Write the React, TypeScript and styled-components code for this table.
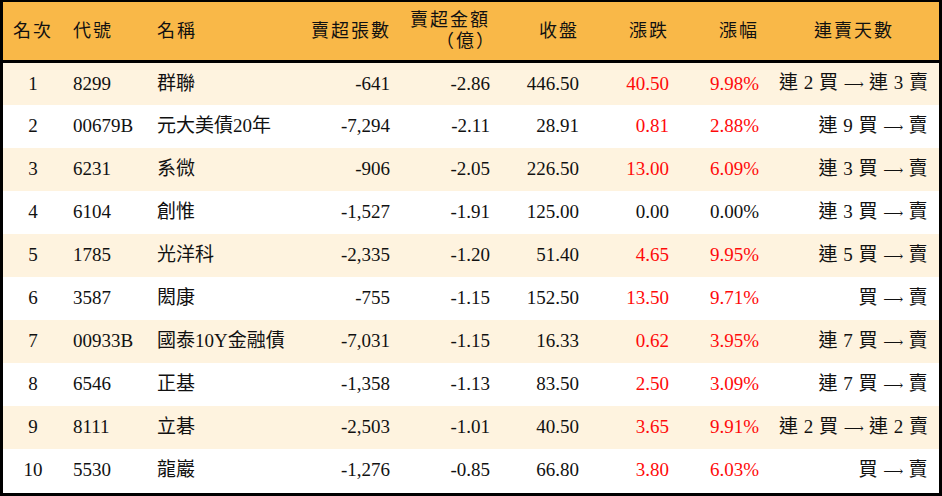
import React from 'react';
import styled, { createGlobalStyle } from 'styled-components';

const GlobalStyle = createGlobalStyle`
    html, body {
        margin: 0;
        padding: 0;
        background: #ffffff;
    }
`;

interface Row {
    rank: number;
    code: string;
    name: string;
    shares: string;
    amount: string;
    close: string;
    change: string;
    pct: string;
    buy: string;
    sell: string;
}

const rows: Row[] = [
    { rank: 1, code: '8299', name: '群聯', shares: '-641', amount: '-2.86', close: '446.50', change: '40.50', pct: '9.98%', buy: '連 2 買', sell: '連 3 賣' },
    { rank: 2, code: '00679B', name: '元大美債20年', shares: '-7,294', amount: '-2.11', close: '28.91', change: '0.81', pct: '2.88%', buy: '連 9 買', sell: '賣' },
    { rank: 3, code: '6231', name: '系微', shares: '-906', amount: '-2.05', close: '226.50', change: '13.00', pct: '6.09%', buy: '連 3 買', sell: '賣' },
    { rank: 4, code: '6104', name: '創惟', shares: '-1,527', amount: '-1.91', close: '125.00', change: '0.00', pct: '0.00%', buy: '連 3 買', sell: '賣' },
    { rank: 5, code: '1785', name: '光洋科', shares: '-2,335', amount: '-1.20', close: '51.40', change: '4.65', pct: '9.95%', buy: '連 5 買', sell: '賣' },
    { rank: 6, code: '3587', name: '閎康', shares: '-755', amount: '-1.15', close: '152.50', change: '13.50', pct: '9.71%', buy: '買', sell: '賣' },
    { rank: 7, code: '00933B', name: '國泰10Y金融債', shares: '-7,031', amount: '-1.15', close: '16.33', change: '0.62', pct: '3.95%', buy: '連 7 買', sell: '賣' },
    { rank: 8, code: '6546', name: '正基', shares: '-1,358', amount: '-1.13', close: '83.50', change: '2.50', pct: '3.09%', buy: '連 7 買', sell: '賣' },
    { rank: 9, code: '8111', name: '立碁', shares: '-2,503', amount: '-1.01', close: '40.50', change: '3.65', pct: '9.91%', buy: '連 2 買', sell: '連 2 賣' },
    { rank: 10, code: '5530', name: '龍巖', shares: '-1,276', amount: '-0.85', close: '66.80', change: '3.80', pct: '6.03%', buy: '買', sell: '賣' },
];

const colWidths = [60, 84, 154, 99, 100, 89, 90, 90, 170];

export default function App() {
    return (
        <>
            <GlobalStyle />
            <Frame>
                <Table>
                    <colgroup>
                        {colWidths.map((w, i) => (
                            <col key={i} style={{ width: w }} />
                        ))}
                    </colgroup>
                    <thead>
                        <tr>
                            <Th align='center'>名次</Th>
                            <Th align='left'>代號</Th>
                            <Th align='left'>名稱</Th>
                            <Th align='right'>賣超張數</Th>
                            <Th align='right'>
                                賣超金額
                                <br />
                                <Sub>（億）</Sub>
                            </Th>
                            <Th align='right'>收盤</Th>
                            <Th align='right'>漲跌</Th>
                            <Th align='right'>漲幅</Th>
                            <Th align='center'>連賣天數</Th>
                        </tr>
                    </thead>
                    <tbody>
                        {rows.map((r) => {
                            const up = r.change !== '0.00';
                            return (
                                <Tr key={r.rank} shaded={r.rank % 2 === 1}>
                                    <Td align='center'>{r.rank}</Td>
                                    <Td align='left'>{r.code}</Td>
                                    <Td align='left'>{r.name}</Td>
                                    <Td align='right'>{r.shares}</Td>
                                    <Td align='right'>{r.amount}</Td>
                                    <Td align='right'>{r.close}</Td>
                                    <Td align='right' red={up}>{r.change}</Td>
                                    <Td align='right' red={up}>{r.pct}</Td>
                                    <Td align='right' wide>
                                        {r.buy} <Arrow>⟶</Arrow> {r.sell}
                                    </Td>
                                </Tr>
                            );
                        })}
                    </tbody>
                </Table>
            </Frame>
        </>
    );
}

const Frame = styled.div`
    width: 942px;
    height: 496px;
    box-sizing: border-box;
    border-style: solid;
    border-color: #000000;
    border-width: 2px 3px 3px 3px;
    overflow: hidden;
    font-family: 'Liberation Serif', 'Noto Sans CJK TC', serif;
    font-size: 19px;
    color: #111111;
`;

const Table = styled.table`
    width: 936px;
    border-collapse: collapse;
    table-layout: fixed;
`;

type Align = 'left' | 'right' | 'center';

const Th = styled.th<{ align: Align }>`
    height: 58px;
    padding: 0 10px;
    background: #f9b848;
    border-bottom: 3px solid #000000;
    text-align: ${(p) => p.align};
    font-weight: 400;
    font-size: 18px;
    line-height: 21px;
    letter-spacing: 2px;
    vertical-align: middle;
    white-space: nowrap;
`;

const Sub = styled.span`
    display: inline-block;
    margin-right: -6px;
`;

const Tr = styled.tr<{ shaded: boolean }>`
    height: 43px;
    background: ${(p) => (p.shaded ? '#fef3df' : '#ffffff')};
`;

const Td = styled.td<{ align: Align; red?: boolean; wide?: boolean }>`
    padding: 0 ${(p) => (p.wide ? '11px' : '10px')} 0 10px;
    text-align: ${(p) => p.align};
    color: ${(p) => (p.red ? '#ff0a0a' : '#111111')};
    white-space: nowrap;
    vertical-align: middle;
    line-height: 22px;
    letter-spacing: ${(p) => (p.wide ? '0.5px' : '0')};
`;

const Arrow = styled.span`
    font-family: 'DejaVu Serif', 'DejaVu Sans', serif;
    font-size: 14px;
    letter-spacing: 0;
`;
